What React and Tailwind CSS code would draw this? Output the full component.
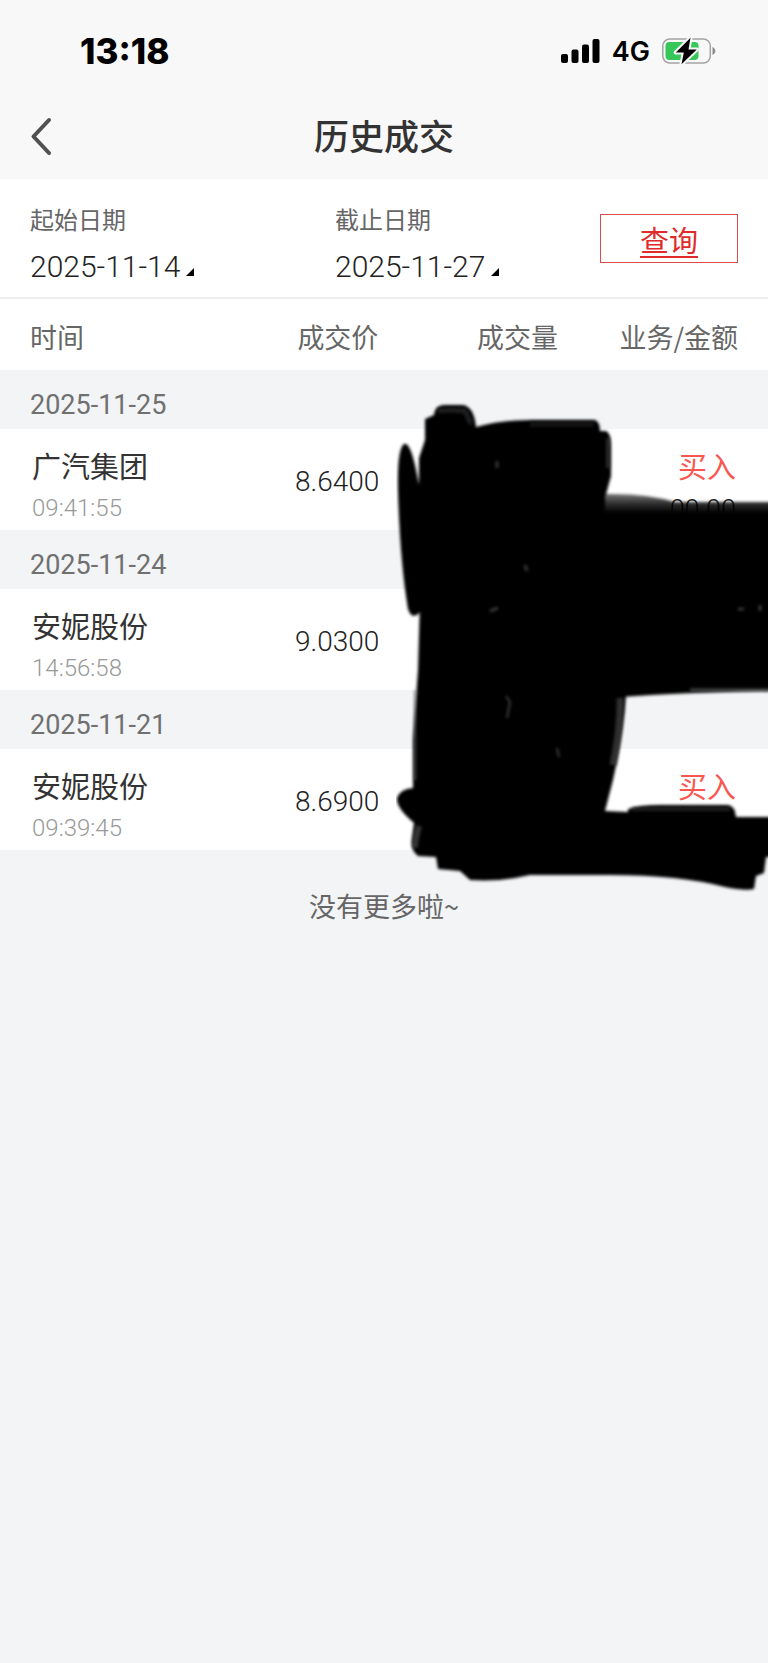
import React from "react";

const cjk = "font-['Noto_Sans_CJK_SC',sans-serif]";
const num = "font-[Roboto,'Noto_Sans_CJK_SC',sans-serif]";

const records = [
  { date: "2025-11-25", name: "广汽集团", time: "09:41:55", price: "8.6400", side: "买入", amount: "00.00" },
  { date: "2025-11-24", name: "安妮股份", time: "14:56:58", price: "9.0300", side: "", amount: "" },
  { date: "2025-11-21", name: "安妮股份", time: "09:39:45", price: "8.6900", side: "买入", amount: "" },
];

function StatusBar() {
  return (
    <div className="flex h-[102px] items-center justify-between pr-[52px] pl-[80px] text-black">
      <span className="font-[Inter,sans-serif] text-[35px] leading-[40px] font-extrabold">13:18</span>
      <div className="flex items-center gap-3">
        <svg width="39" height="24" viewBox="0 0 39 24" aria-hidden="true">
          <rect x="0" y="15" width="7" height="9" rx="2" />
          <rect x="10.5" y="10.5" width="7" height="13.5" rx="2" />
          <rect x="21" y="5.5" width="7" height="18.5" rx="2" />
          <rect x="31.5" y="0" width="7" height="24" rx="2" />
        </svg>
        <span className="pt-[2px] font-[Inter,sans-serif] text-[27px] leading-[32px] font-semibold">4G</span>
        <svg width="54" height="28" viewBox="0 0 54 28" aria-hidden="true">
          <rect x="0.8" y="2" width="47.5" height="24" rx="7" fill="none" stroke="#a3a3a3" strokeWidth="1.5" />
          <path d="M50.5 10c3.8 1.500 3.8 6.500 0 8z" fill="#8c8c8c" />
          <rect x="3.5" y="5" width="33" height="18" rx="4" fill="#35c759" />
          <path d="M28.5 0.800 13.800 15.500h8L19.500 27.200 34.800 12.500h-8.300z" fill="#000" stroke="#f8f8f8" strokeWidth="4" strokeLinejoin="round" paintOrder="stroke" />
        </svg>
      </div>
    </div>
  );
}

function TitleBar() {
  return (
    <div className="grid h-[77px] grid-cols-[1fr_auto_1fr] items-center px-[30px] pb-[12px]">
      <button type="button" aria-label="返回" className="flex w-[24px] items-center pt-[2px]">
        <svg width="24" height="40" viewBox="0 0 24 40" fill="none" aria-hidden="true">
          <path d="M19 4 3.500 20.500 19 37" stroke="#505050" strokeWidth="4" strokeLinecap="round" strokeLinejoin="round" />
        </svg>
      </button>
      <h1 className="text-[35px] leading-[48px] font-medium text-[#333]">历史成交</h1>
    </div>
  );
}

function DateField({ label, value }) {
  return (
    <div className="flex flex-col">
      <span className="text-[24px] leading-[36px] text-[#666]">{label}</span>
      <button type="button" aria-label={label + " " + value} className="flex items-end gap-1.5 pt-[10px] text-left">
        <span className={num + " text-[30px] leading-[40px] font-light text-[#222]"}>{value}</span>
        <svg width="8" height="8" viewBox="0 0 8 8" className="mb-[11px]" aria-hidden="true">
          <path d="M8 0v8H0z" fill="#000" />
        </svg>
      </button>
    </div>
  );
}

function Scribble() {
  return (
    <svg width="372" height="500" viewBox="396 400 372 500" className="pointer-events-none absolute top-[101px] right-0" aria-hidden="true">
      <defs>
        <filter id="soft" x="-5%" y="-5%" width="110%" height="110%">
          <feGaussianBlur stdDeviation="1.500" />
        </filter>
        <linearGradient id="smear" x1="0" y1="493" x2="0" y2="513" gradientUnits="userSpaceOnUse">
          <stop offset="0" stopColor="#000" stopOpacity="0.500" />
          <stop offset="0.500" stopColor="#000" stopOpacity="0.800" />
          <stop offset="1" stopColor="#000" />
        </linearGradient>
      </defs>
      <g filter="url(#soft)">
        <path d="M404 444Q397 449 398 491Q400 561 408 609Q412 621 420 612L424 560L422 500L418 480Q411 441 404 444Z" />
        <path d="M420 600L419 500L419 458L425 440V419L434 415Q435 405 444 405H463Q474 407 476 427Q500 420 530 420H595Q600 422 600 431H606Q611 433 611 446V476L605 498V690L626 695Q624 730 613 780L605 811L628 812V809Q640 805 660 805H728Q735 806 736 817H775V857H766L764 873L756 876L754 889Q745 891 725 887Q680 875 610 875H530Q500 882 470 880L460 871L438 869L436 857L418 856Q410 850 412 838L414 823Q396 808 397 798Q400 789 413 788V740L418 670Z" />
        <path d="M600 514V699Q660 693 775 691V514Z" />
        <path d="M606 494Q645 493 675 502L775 502V522H600Z" fill="url(#smear)" />
      </g>
      <g fill="none" filter="url(#soft)">
        <path d="M620 698Q621 725 613 765" stroke="#444" strokeWidth="7" opacity="0.700" />
        <path d="M419 826Q415 840 415 848" stroke="#555" strokeWidth="6" opacity="0.600" />
        <path d="M632 809H730" stroke="#333" strokeWidth="4" opacity="0.600" />
        <path d="M438 411Q450 409 465 411L471 424" stroke="#333" strokeWidth="5" opacity="0.600" />
        <path d="M530 424H594" stroke="#222" strokeWidth="6" opacity="0.600" />
        <path d="M690 690H775" stroke="#777" strokeWidth="3" opacity="0.600" />
        <path d="M415 690V780" stroke="#666" strokeWidth="2" opacity="0.700" />
        <path d="M608 438V468" stroke="#444" strokeWidth="4" opacity="0.600" />
        <path d="M506 696 510 702 507 718M557 748 559 757" stroke="#777" strokeWidth="2" opacity="0.500" />
        <path d="M497 461V468M525 565 527 571M498 608 490 611M760 605V611M738 609H744" stroke="#777" strokeWidth="3" opacity="0.450" />
      </g>
    </svg>
  );
}

function History() {
  return (
    <div className="relative">
      <table className="w-full table-fixed border-collapse">
        <thead>
          <tr className="h-[71px] bg-white text-[27px] leading-[40px] text-[#666]">
            <th scope="col" className="w-[26%] pt-[4px] pl-[30px] text-left font-normal">时间</th>
            <th scope="col" className="w-[23.4%] pt-[4px] pr-px text-right font-normal">成交价</th>
            <th scope="col" className="w-[23.4%] pt-[4px] pr-px text-right font-normal">成交量</th>
            <th scope="col" className="pt-[4px] pr-[30px] text-right font-normal">业务/金额</th>
          </tr>
        </thead>
        {records.map((r) => (
          <tbody key={r.date}>
            <tr className="h-[59px]">
              <th scope="rowgroup" colSpan={4} className={num + " pt-[10px] pl-[30px] text-left text-[27px] leading-[40px] font-normal text-[#707070]"}>
                {r.date}
              </th>
            </tr>
            <tr className="h-[101px] bg-white text-[#222]">
              <td className="pt-[13px] pl-[32px] align-top">
                <div className="text-[29px] leading-[46px] text-[#333]">{r.name}</div>
                <div className={num + " pt-[2px] text-[24px] leading-[36px] font-light text-[#999]"}>{r.time}</div>
              </td>
              <td className={num + " pt-[5px] text-right text-[28px] leading-[40px] font-light"}>{r.price}</td>
              <td />
              <td className="pt-[13px] pr-[32px] text-right align-top">
                <div className="text-[29px] leading-[46px] text-[#f9564f]">{r.side}</div>
                <div className={num + " pt-[2px] text-[27px] leading-[40px] font-light"}>{r.amount}</div>
              </td>
            </tr>
          </tbody>
        ))}
      </table>
      <Scribble />
    </div>
  );
}

export default function App() {
  return (
    <div className={cjk + " min-h-screen bg-[#f2f4f6]"}>
      <header className="bg-[#f8f8f8]">
        <StatusBar />
        <TitleBar />
      </header>
      <main>
        <section className="grid grid-cols-[305fr_265fr_138px] border-b-2 border-[#ececec] bg-white px-[30px] pt-[22px] pb-[10px]">
          <DateField label="起始日期" value="2025-11-14" />
          <DateField label="截止日期" value="2025-11-27" />
          <button type="button" className="mt-[13px] h-[49px] self-start border border-[#dc4a4a] text-[29px] leading-[40px] text-[#e02b2b] underline underline-offset-4">
            查询
          </button>
        </section>
        <History />
        <p className="pt-[36px] text-center text-[27px] leading-[40px] text-[#666]">没有更多啦~</p>
      </main>
    </div>
  );
}
